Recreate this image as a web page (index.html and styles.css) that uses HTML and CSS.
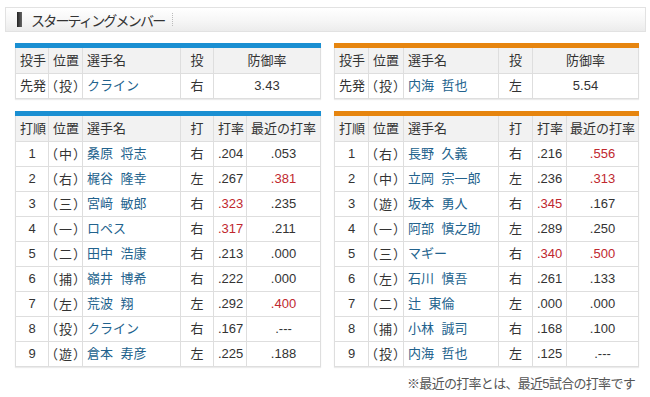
FILE: index.html
```html
<!DOCTYPE html>
<html lang="ja">
<head>
<meta charset="utf-8">
<link rel="stylesheet" href="styles.css">
</head>
<body>
<div class="title"><span class="mark"></span><span class="title-text">スターティングメンバー</span><span class="sep"></span></div>
<div class="cols">
  <div class="col col-left">
    <table class="tbl pitch blue">
      <colgroup><col class="c1"><col class="c2"><col class="c3"><col class="c4"><col class="c5w"></colgroup>
      <tr class="hd"><th>投手</th><th>位置</th><th>選手名</th><th class="ctr">投</th><th class="ctr">防御率</th></tr>
      <tr><td>先発</td><td class="pos">（投）</td><td class="nm">クライン</td><td class="ctr">右</td><td class="ctr">3.43</td></tr>
    </table>
    <table class="tbl bat blue">
      <colgroup><col class="c1"><col class="c2"><col class="c3"><col class="c4"><col class="c5"><col class="c6"></colgroup>
      <tr class="hd"><th>打順</th><th>位置</th><th>選手名</th><th class="ctr">打</th><th>打率</th><th class="ctr">最近の打率</th></tr>
      <tr><td class="ctr">1</td><td class="pos">（中）</td><td class="nm">桑原 将志</td><td class="ctr">右</td><td>.204</td><td class="ctr">.053</td></tr>
      <tr><td class="ctr">2</td><td class="pos">（右）</td><td class="nm">梶谷 隆幸</td><td class="ctr">左</td><td>.267</td><td class="ctr red">.381</td></tr>
      <tr><td class="ctr">3</td><td class="pos">（三）</td><td class="nm">宮﨑 敏郎</td><td class="ctr">右</td><td class="red">.323</td><td class="ctr">.235</td></tr>
      <tr><td class="ctr">4</td><td class="pos">（一）</td><td class="nm">ロペス</td><td class="ctr">右</td><td class="red">.317</td><td class="ctr">.211</td></tr>
      <tr><td class="ctr">5</td><td class="pos">（二）</td><td class="nm">田中 浩康</td><td class="ctr">右</td><td>.213</td><td class="ctr">.000</td></tr>
      <tr><td class="ctr">6</td><td class="pos">（捕）</td><td class="nm">嶺井 博希</td><td class="ctr">右</td><td>.222</td><td class="ctr">.000</td></tr>
      <tr><td class="ctr">7</td><td class="pos">（左）</td><td class="nm">荒波 翔</td><td class="ctr">左</td><td>.292</td><td class="ctr red">.400</td></tr>
      <tr><td class="ctr">8</td><td class="pos">（投）</td><td class="nm">クライン</td><td class="ctr">右</td><td>.167</td><td class="ctr">.---</td></tr>
      <tr><td class="ctr">9</td><td class="pos">（遊）</td><td class="nm">倉本 寿彦</td><td class="ctr">左</td><td>.225</td><td class="ctr">.188</td></tr>
    </table>
  </div>
  <div class="col col-right">
    <table class="tbl pitch orange">
      <colgroup><col class="r1"><col class="r2"><col class="r3"><col class="r4"><col class="r5w"></colgroup>
      <tr class="hd"><th>投手</th><th>位置</th><th>選手名</th><th class="ctr">投</th><th class="ctr">防御率</th></tr>
      <tr><td>先発</td><td class="pos">（投）</td><td class="nm">内海 哲也</td><td class="ctr">左</td><td class="ctr">5.54</td></tr>
    </table>
    <table class="tbl bat orange">
      <colgroup><col class="r1"><col class="r2"><col class="r3"><col class="r4"><col class="r5"><col class="r6"></colgroup>
      <tr class="hd"><th>打順</th><th>位置</th><th>選手名</th><th class="ctr">打</th><th>打率</th><th class="ctr">最近の打率</th></tr>
      <tr><td class="ctr">1</td><td class="pos">（右）</td><td class="nm">長野 久義</td><td class="ctr">右</td><td>.216</td><td class="ctr red">.556</td></tr>
      <tr><td class="ctr">2</td><td class="pos">（中）</td><td class="nm">立岡 宗一郎</td><td class="ctr">左</td><td>.236</td><td class="ctr red">.313</td></tr>
      <tr><td class="ctr">3</td><td class="pos">（遊）</td><td class="nm">坂本 勇人</td><td class="ctr">右</td><td class="red">.345</td><td class="ctr">.167</td></tr>
      <tr><td class="ctr">4</td><td class="pos">（一）</td><td class="nm">阿部 慎之助</td><td class="ctr">左</td><td>.289</td><td class="ctr">.250</td></tr>
      <tr><td class="ctr">5</td><td class="pos">（三）</td><td class="nm">マギー</td><td class="ctr">右</td><td class="red">.340</td><td class="ctr red">.500</td></tr>
      <tr><td class="ctr">6</td><td class="pos">（左）</td><td class="nm">石川 慎吾</td><td class="ctr">右</td><td>.261</td><td class="ctr">.133</td></tr>
      <tr><td class="ctr">7</td><td class="pos">（二）</td><td class="nm">辻 東倫</td><td class="ctr">左</td><td>.000</td><td class="ctr">.000</td></tr>
      <tr><td class="ctr">8</td><td class="pos">（捕）</td><td class="nm">小林 誠司</td><td class="ctr">右</td><td>.168</td><td class="ctr">.100</td></tr>
      <tr><td class="ctr">9</td><td class="pos">（投）</td><td class="nm">内海 哲也</td><td class="ctr">左</td><td>.125</td><td class="ctr">.---</td></tr>
    </table>
    <p class="note">※最近の打率とは、最近5試合の打率です</p>
  </div>
</div>
</body>
</html>
```
FILE: styles.css
```css
html, body {
  margin: 0;
  padding: 0;
  background: #fff;
}
body {
  font-family: "Liberation Sans", "Noto Sans CJK JP", sans-serif;
  color: #333;
  font-size: 13px;
}
.title {
  margin: 7px 4px 0 5px;
  height: 23px;
  border: 1px solid #e2e2e2;
  background: linear-gradient(#ffffff, #f6f6f6 55%, #ececec);
  display: flex;
  align-items: center;
  padding-left: 11px;
}
.mark {
  width: 5px;
  height: 15px;
  background: linear-gradient(90deg, #222, #666);
  margin-right: 9px;
}
.title-text {
  font-size: 14px;
  color: #333;
  letter-spacing: -1.8px;
}
.sep {
  width: 0;
  height: 13px;
  border-left: 1px dotted #bbb;
  margin-left: 8px;
}
.cols {
  display: flex;
  padding: 11px 0 0 15px;
  gap: 14px;
}
.col-left { width: 305px; }
.col-right { width: 304px; }
.tbl {
  border-collapse: collapse;
  table-layout: fixed;
  width: 100%;
  box-shadow: 0 1px 1px rgba(0,0,0,0.08);
}
.tbl.blue { border-top: 5px solid #1a8fd2; }
.tbl.orange { border-top: 5px solid #e6850f; }
.tbl.bat { margin-top: 12px; }
.tbl th, .tbl td {
  border: 1px solid #dedede;
  height: 24px;
  padding: 0 0 0 4px;
  text-align: left;
  font-weight: normal;
  white-space: nowrap;
  line-height: 24px;
}
.tbl tr.hd th {
  background: #f2f2f2;
  height: 25px;
}
.tbl .ctr { text-align: center; padding: 0; }
.tbl td.pos {
  padding: 0;
  font-family: "Noto Sans CJK JP", sans-serif;
  font-size: 13px;
  letter-spacing: 1px;
  text-indent: -4px;
  text-spacing-trim: space-all;
  font-feature-settings: "halt" 0, "chws" 0;
}
.tbl td.nm { color: #22628d; word-spacing: 4px; }
.tbl .red { color: #c0282e; }
.c1 { width: 33px; }
.c2 { width: 34px; }
.c3 { width: 98px; }
.c4 { width: 33px; }
.c5 { width: 33px; }
.c6 { width: 74px; }
.c5w { width: 107px; }
.r1 { width: 34px; }
.r2 { width: 35px; }
.r3 { width: 95px; }
.r4 { width: 34px; }
.r5 { width: 34px; }
.r6 { width: 72px; }
.r5w { width: 106px; }
.note {
  margin: 6px 3px 0 0;
  text-align: right;
  color: #555;
  font-size: 13px;
  letter-spacing: -0.7px;
}
```
